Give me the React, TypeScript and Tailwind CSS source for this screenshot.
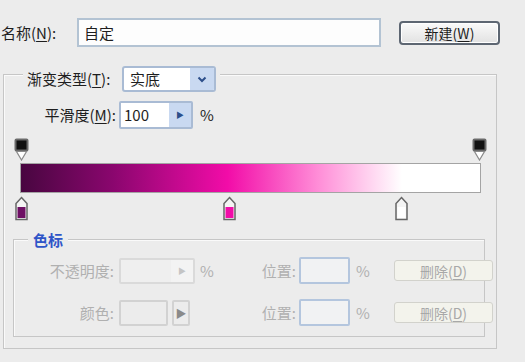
import React from "react";

type StopProps = { left: number; color: string };

function OpacityStop({ left }: { left: number }) {
  return (
    <svg
      className="absolute top-0"
      style={{ left }}
      width="15"
      height="23"
      viewBox="0 0 15 23"
    >
      <rect x="1.5" y="1.5" width="12" height="11" rx="1" fill="#111" stroke="#6a6a6a" strokeWidth="2" />
      <path d="M2.5 13.5 L12.5 13.5 L7.5 22 Z" fill="#fff" stroke="#8a8a8a" strokeWidth="1.2" />
    </svg>
  );
}

function ColorStop({ left, color }: StopProps) {
  return (
    <svg
      className="absolute top-[58px]"
      style={{ left }}
      width="15"
      height="25"
      viewBox="0 0 15 25"
    >
      <path d="M7.5 1.5 L13 7.5 L13 23.5 L2 23.5 L2 7.5 Z" fill="#f4f4f4" stroke="#666" strokeWidth="1.5" />
      <rect x="3.5" y="11" width="8" height="11" fill={color} />
    </svg>
  );
}

function Underline({ ch }: { ch: string }) {
  return <span className="underline underline-offset-2">{ch}</span>;
}

function PosField() {
  return (
    <>
      <span className="ml-[3px] h-[27px] w-[51px] rounded-[2px] border-2 border-[#b4c6de] bg-[#f1f2f3]" />
      <span className="ml-[6px] w-[12px] text-[#b0b0b0]">%</span>
    </>
  );
}

function DeleteButton() {
  return (
    <span className="ml-[26px] flex h-[21px] w-[99px] items-center justify-center rounded-[3px] border border-[#d2d2cc] bg-[#f3f3ec] text-[14px] text-[#a8a8a8]">
      删除(<Underline ch="D" />)
    </span>
  );
}

export default function App() {
  return (
    <div
      className="relative h-[362px] w-[525px] overflow-hidden bg-[#ececec] pt-[18px] text-[15px] leading-[18px] text-[#1e1e1e]"
      style={{ fontFamily: '"Noto Sans CJK SC", "Noto Sans", sans-serif' }}
    >
      {/* name row */}
      <div className="flex h-[29px] items-center [&>*]:shrink-0">
        <span className="w-[77px] pl-[1px]">
          名称(<Underline ch="N" />):
        </span>
        <div className="flex h-[29px] w-[304px] items-center border-2 border-[#b3c3d3] bg-[#fdfdfd] pl-[5px]">
          自定
        </div>
        <div className="ml-[18px] flex h-[24px] w-[101px] items-center justify-center rounded-[4px] border-2 border-[#5d6672] bg-gradient-to-b from-[#fafafa] to-[#e2e2e2] text-[14px] shadow-[inset_0_0_0_1px_#fff]">
          新建(<Underline ch="W" />)
        </div>
      </div>

      {/* gradient type group */}
      <div className="ml-[3px] mt-[27px] h-[275px] w-[494px] border border-[#c6c6c6] shadow-[inset_1px_1px_0_#fafafa]">
        <div className="-mt-[9px] ml-[19px] flex w-fit items-center bg-[#ececec] px-[4px]">
          <span className="w-[91px]">
            渐变类型(<Underline ch="T" />):
          </span>
          <div className="ml-[4px] flex h-[26px] w-[94px] items-center overflow-hidden rounded-[3px] border-2 border-[#a9bbd4] bg-white">
            <span className="flex-1 pl-[6px]">实底</span>
            <span className="flex h-full w-[24px] items-center justify-center bg-[#c9d9f1]">
              <svg width="10" height="7" viewBox="0 0 10 7">
                <path d="M1.5 1.5 L5 5 L8.5 1.5" fill="none" stroke="#2d4f8a" strokeWidth="2" />
              </svg>
            </span>
          </div>
        </div>

        <div className="mt-[9px] flex h-[28px] items-center [&>*]:shrink-0">
          <span className="w-[112px] text-right">
            平滑度(<Underline ch="M" />):
          </span>
          <div className="ml-[3px] flex h-[28px] w-[74px] items-center overflow-hidden rounded-[2px] border-2 border-[#a9bbd4] bg-white">
            <span className="flex-1 pl-[3px]">100</span>
            <span className="flex h-full w-[22px] items-center justify-center bg-[#c9d9f1] text-[8px] text-[#2d4f8a]">
              ▶
            </span>
          </div>
          <span className="ml-[7px]">%</span>
        </div>

        {/* gradient bar and stops */}
        <div className="relative mt-[9px] h-[84px] pt-[25px]">
          <OpacityStop left={10} />
          <OpacityStop left={468} />
          <div className="ml-[16px] h-[30px] w-[461px] border border-[#a4a4a4] bg-[linear-gradient(to_right,#480640_0%,#8a066e_20%,#f20ca8_45%,#ff8fd8_65%,#ffffff_83%,#ffffff_100%)]" />
          <ColorStop left={10} color="#6e0f64" />
          <ColorStop left={218} color="#f20ca8" />
          <ColorStop left={390} color="#ffffff" />
        </div>

        {/* color stops group */}
        <div className="ml-[9px] mt-[17px] h-[98px] w-[472px] border border-[#c6c6c6] shadow-[inset_1px_1px_0_#fafafa]">
          <div className="-mt-[9px] ml-[14px] w-fit bg-[#ececec] px-[5px] font-bold text-[#2f55c8]">
            色标
          </div>

          <div className="mt-[8px] flex h-[27px] items-center text-[#b0b0b0] [&>*]:shrink-0">
            <span className="w-[100px] text-right">不透明度:</span>
            <div className="ml-[5px] flex h-[26px] w-[76px] items-center justify-end rounded-[2px] border-2 border-[#dadada] bg-[#efefef]">
              <span className="flex h-full w-[22px] items-center justify-center bg-[#f3f3f3] text-[8px] text-[#c4c4c4]">
                ▶
              </span>
            </div>
            <span className="ml-[5px] w-[12px]">%</span>
            <span className="w-[84px] text-right">位置:</span>
            <PosField />
            <DeleteButton />
          </div>

          <div className="mt-[15px] flex h-[27px] items-center text-[#b0b0b0] [&>*]:shrink-0">
            <span className="w-[100px] text-right">颜色:</span>
            <span className="ml-[5px] h-[26px] w-[49px] rounded-[2px] border-2 border-[#d2d2d2] bg-[#ececec]" />
            <span className="ml-[4px] flex h-[26px] w-[18px] items-center justify-center rounded-[2px] border-2 border-[#d2d2d2] bg-[#ececec] text-[11px] text-[#8a8a8a]">
              ▶
            </span>
            <span className="w-[106px] text-right">位置:</span>
            <PosField />
            <DeleteButton />
          </div>
        </div>
      </div>
    </div>
  );
}
